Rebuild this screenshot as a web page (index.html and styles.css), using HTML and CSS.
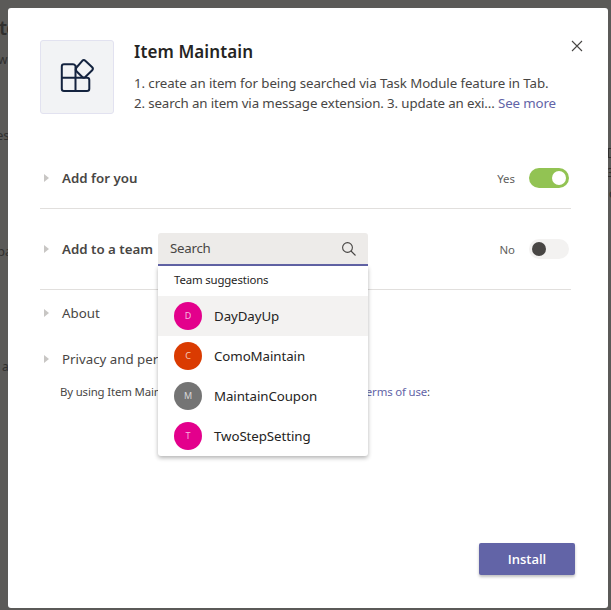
FILE: index.html
```html
<!DOCTYPE html>
<html lang="en">
<head>
<meta charset="utf-8">
<title>Item Maintain</title>
<link rel="stylesheet" href="styles.css">
</head>
<body>
<div class="behind" aria-hidden="true">
  <span class="scrap scrap-title">te</span>
  <span class="scrap scrap-w">w</span>
  <span class="scrap scrap-es">es</span>
  <span class="scrap scrap-pa">pa</span>
  <span class="scrap scrap-a">a</span>
  <span class="scrap scrap-box"></span>
  <span class="scrap scrap-three">3</span>
  <span class="scrap scrap-o">o</span>
</div>
<main class="dialog">
  <header class="head">
    <div class="logo">
      <svg width="36" height="36" viewBox="0 0 36 36" fill="none" stroke="#14233f" stroke-width="2" stroke-linejoin="round">
        <path d="M16.500 8V6.800Q15.500 5.300 14 5.300H5Q2.800 5.300 2.800 7.500V29.800Q2.800 32 5 32H28Q30.300 32 30.300 29.800V21Q30.300 18.800 28 18.800H2.800M16.500 6V32"/>
        <path d="M23.300 1.800Q24.800.3 26.300 1.800L33.200 8.300Q34.600 9.800 33.200 11.300L26.300 18Q24.800 19.200 23.300 18L17.500 12.200Q16.200 10.500 17.500 8.500Z"/>
      </svg>
    </div>
    <div class="intro">
      <h1>Item Maintain</h1>
      <p><span class="line line-one">1. create an item for being searched via Task Module feature in Tab.</span><span class="line line-two">2. search an item via message extension. 3. update an exi... <a>See more</a></span></p>
    </div>
    <svg class="close" width="12" height="12" viewBox="0 0 12 12" stroke="#484644" stroke-width="1.1"><path d="M1 1l10 10M11 1L1 11"/></svg>
  </header>
  <section class="row row-you">
    <i class="caret"></i><span class="label strong">Add for you</span>
    <span class="state">Yes</span><span class="toggle on"></span>
  </section>
  <section class="row row-team">
    <i class="caret"></i><span class="label strong team-label">Add to a team</span>
    <div class="picker">
      <div class="search"><span>Search</span>
        <svg width="16" height="16" viewBox="0 0 16 16" fill="none" stroke="#484644" stroke-width="1.1"><circle cx="6.500" cy="6.500" r="4.900"/><path d="M10 10l4.500 4.500"/></svg>
      </div>
      <div class="menu">
        <div class="menu-title">Team suggestions</div>
        <div class="option active"><b class="avatar pink">D</b><span>DayDayUp</span></div>
        <div class="option"><b class="avatar orange">C</b><span>ComoMaintain</span></div>
        <div class="option"><b class="avatar gray">M</b><span>MaintainCoupon</span></div>
        <div class="option"><b class="avatar pink">T</b><span>TwoStepSetting</span></div>
      </div>
    </div>
    <span class="state">No</span><span class="toggle"></span>
  </section>
  <section class="row plain"><i class="caret"></i><span class="label">About</span></section>
  <section class="row plain"><i class="caret"></i><span class="label">Privacy and permissions</span></section>
  <p class="legal"><span>By using Item Maintain, you agree to the</span><span><a>privacy policy and terms of use</a>:</span></p>
  <footer><button>Install</button></footer>
</main>
</body>
</html>
```
FILE: styles.css
```css
* { box-sizing: border-box; }
body {
  margin: 0;
  padding: 8px 3px 2px 8px;
  height: 610px;
  overflow: hidden;
  background: #5b5a58;
  color: #484644;
  font: 13.3px/20px "Noto Sans", "Open Sans", sans-serif;
}
a { color: #6264a7; }
.scrap { position: absolute; color: #302f2e; line-height: 20px; font-size: 13px; white-space: nowrap; }
.scrap-title { left: -1px; top: 18px; font-size: 20px; font-weight: 600; letter-spacing: -1px; }
.scrap-w { left: -2px; top: 50px; font-size: 12px; }
.scrap-es { left: -4px; top: 125px; }
.scrap-pa { left: -3px; top: 241px; }
.scrap-a { left: 2px; top: 357px; font-size: 12px; }
.scrap-box { left: 608px; top: 148px; width: 8px; height: 10px; border: 1px solid #302f2e; }
.scrap-three { left: 607px; top: 163px; font-size: 12px; }
.scrap-o { left: 609px; top: 184px; font-size: 12px; }
.dialog {
  position: relative;
  display: flex;
  flex-direction: column;
  width: 600px;
  height: 600px;
  padding: 32px;
  border-radius: 3px;
  background: #fff;
}
.head { display: flex; height: 108px; padding-right: 12px; }
.logo {
  display: flex;
  align-items: center;
  justify-content: center;
  flex: none;
  width: 74px;
  height: 74px;
  border: 1px solid #e2e2f0;
  border-radius: 3px;
  background: #f2f3f5;
}
.intro { width: 437px; margin-left: 20px; }
h1 { margin: 0; color: #252423; font-size: 17px; line-height: 24px; font-weight: 600; letter-spacing: .1px; }
.intro p { margin: 9px 0 0; }
.line { display: block; white-space: nowrap; }
.line-one { letter-spacing: -.09px; }
.line-two { letter-spacing: -.125px; }
.close { position: absolute; left: 563px; top: 32px; }
.row { display: flex; align-items: center; width: 531px; padding-left: 4px; flex: none; }
.row-you { height: 61px; border-bottom: 1px solid #e1dfdd; }
.row-team { height: 81px; border-bottom: 1px solid #e1dfdd; }
.plain { height: 46px; }
.caret {
  flex: none;
  margin-right: 13px;
  border: 4px solid transparent;
  border-left: 5px solid #c8c6c4;
  border-right: 0;
}
.label { white-space: nowrap; }
.strong { font-weight: 600; }
.team-label { width: 96px; }
.state { margin-left: auto; font-size: 11.400px; line-height: 18px; padding-top: 2px; color: #605e5c; }
.toggle { width: 40px; height: 20px; margin: 0 2px 0 14px; padding: 3px; border-radius: 10px; background: #f3f2f1; }
.toggle::before { content: ""; display: block; width: 14px; height: 14px; border-radius: 50%; background: #484644; }
.toggle.on { background: #92c353; }
.toggle.on::before { margin-left: 20px; background: #fff; }
.picker { position: relative; width: 210px; z-index: 1; }
.search {
  display: flex;
  align-items: center;
  justify-content: space-between;
  height: 33px;
  padding: 0 11px 0 12px;
  border-bottom: 2px solid #6264a7;
  border-radius: 3px 3px 0 0;
  background: #edebe9;
}
.search span { letter-spacing: -.25px; }
.search svg { position: relative; top: 1px; }
.menu {
  position: absolute;
  top: 100%;
  left: 0;
  width: 100%;
  height: 190px;
  border-radius: 0 0 3px 3px;
  background: #fff;
  color: #252423;
  box-shadow: 0 2px 4px rgba(0, 0, 0, .3);
}
.menu-title { height: 30px; padding-left: 16px; line-height: 28px; font-size: 11.4px; letter-spacing: -.15px; }
.option { display: flex; align-items: center; height: 40px; padding-left: 16px; letter-spacing: -.08px; }
.option.active { background: #f3f2f1; }
.avatar {
  display: flex;
  align-items: center;
  justify-content: center;
  width: 28px;
  height: 28px;
  margin-right: 12px;
  border-radius: 50%;
  color: #ffffffb8;
  font-size: 9px;
  font-weight: 400;
}
.pink { background: #e3008c; }
.orange { background: #da3b01; }
.gray { background: #747474; }
.legal {
  display: grid;
  grid-template-columns: 98px 272px;
  width: 370px;
  margin: 0 0 0 20px;
  font-size: 11.4px;
  letter-spacing: -.15px;
  white-space: nowrap;
}
.legal span:first-child { overflow: hidden; }
.legal span:last-child { text-align: right; }
footer { display: flex; justify-content: flex-end; margin: auto 1px 1px 0; }
button {
  width: 96px;
  height: 32px;
  padding: 0;
  border: 0;
  border-radius: 2px;
  background: #6264a7;
  color: #fff;
  font: 600 13px/32px "Open Sans", sans-serif;
  box-shadow: 0 2px 3px rgba(0, 0, 0, .25);
}
```
